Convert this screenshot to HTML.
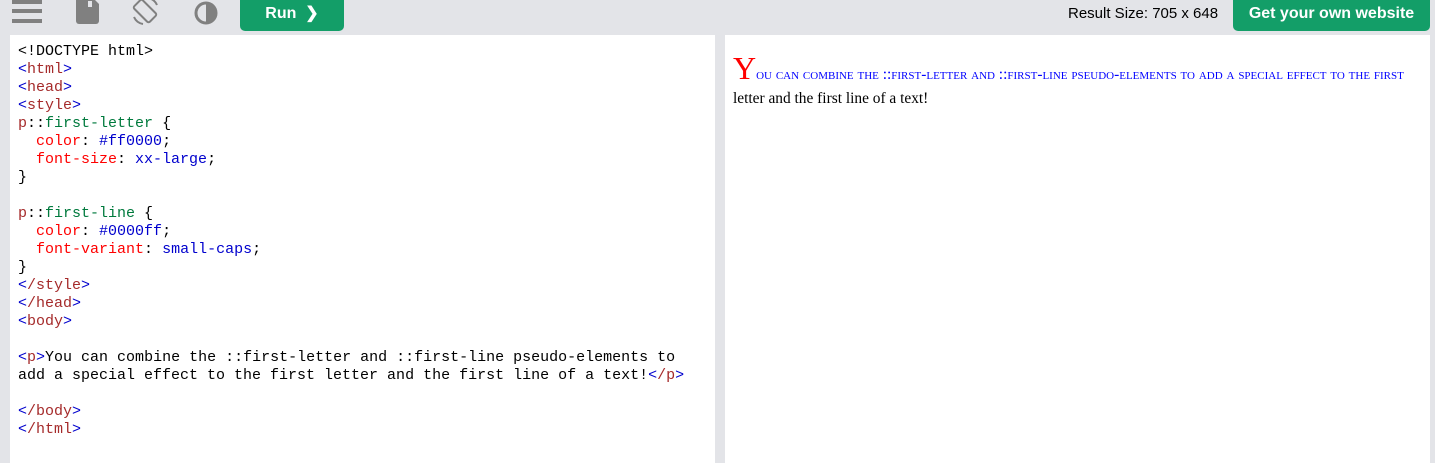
<!DOCTYPE html>
<html><head><style>
body{margin:0;width:1435px;height:463px;background:#e3e4e8;position:relative;overflow:hidden;font-family:"Liberation Sans",sans-serif}
.top{position:absolute;left:0;top:0;width:1435px;height:35px}
.btn{position:absolute;background:#139e68;color:#fff;font-weight:bold;border-radius:0 0 5px 5px}
.panel{position:absolute;top:35px;background:#fff;height:428px}
pre{margin:0;position:absolute;left:18px;top:43px;font-family:"Liberation Mono",monospace;font-size:15px;line-height:18px;color:#000}
.t{color:#a52a2a}.b{color:#0000cd}.r{color:#ff0000}.k{color:#0000cd}
.g{color:#007a3d}
p.o{position:absolute;left:733px;top:56px;width:690px;margin:0;font-family:"Liberation Serif",serif;font-size:15.4px;line-height:24px}
p.o::first-line{color:#0000ff;font-variant:small-caps}
p.o::first-letter{color:#ff0000;font-size:32px}
</style></head><body>
<div class="top">
<svg width="40" height="30" style="position:absolute;left:10px;top:0"><rect x="2" y="0" width="30" height="4" fill="#808080"/><rect x="2" y="9" width="30" height="4" fill="#808080"/><rect x="2" y="19" width="30" height="4" fill="#808080"/></svg>
<svg width="26" height="26" style="position:absolute;left:74px;top:0"><path d="M2 0h19l4 4v17a3 3 0 0 1-3 3H5a3 3 0 0 1-3-3z" fill="#808080"/><rect x="14" y="1" width="4" height="6" fill="#e3e4e8"/></svg>
<svg width="34" height="30" style="position:absolute;left:129px;top:-3px"><g fill="none" stroke="#808080" stroke-width="2"><rect x="10" y="3" width="12" height="22" rx="2" transform="rotate(-45 16 14)"/><path d="M5 20a12 12 0 0 0 9 7M28 8a12 12 0 0 0-9-7"/></g></svg>
<svg width="26" height="26" style="position:absolute;left:194px;top:1px"><circle cx="12" cy="12" r="10" fill="none" stroke="#808080" stroke-width="3"/><path d="M12 2a10 10 0 0 1 0 20z" fill="#808080"/></svg>
<div class="btn" style="left:240px;top:0;width:104px;height:31px;font-size:16px;line-height:27px;text-align:center">Run &nbsp;❯</div>
<div style="position:absolute;left:1068px;top:5px;font-size:15px;color:#000">Result Size: 705 x 648</div>
<div class="btn" style="left:1233px;top:0;width:197px;height:31px;font-size:16px;line-height:27px;text-align:center">Get your own website</div>
</div>
<div class="panel" style="left:10px;width:705px"></div>
<div class="panel" style="left:725px;width:705px"></div>
<pre>&lt;!DOCTYPE html&gt;
<span class="b">&lt;</span><span class="t">html</span><span class="b">&gt;</span>
<span class="b">&lt;</span><span class="t">head</span><span class="b">&gt;</span>
<span class="b">&lt;</span><span class="t">style</span><span class="b">&gt;</span>
<span class="t">p</span>::<span class="g">first-letter</span> {
  <span class="r">color</span>: <span class="k">#ff0000</span>;
  <span class="r">font-size</span>: <span class="k">xx-large</span>;
}

<span class="t">p</span>::<span class="g">first-line</span> {
  <span class="r">color</span>: <span class="k">#0000ff</span>;
  <span class="r">font-variant</span>: <span class="k">small-caps</span>;
}
<span class="b">&lt;</span><span class="t">/style</span><span class="b">&gt;</span>
<span class="b">&lt;</span><span class="t">/head</span><span class="b">&gt;</span>
<span class="b">&lt;</span><span class="t">body</span><span class="b">&gt;</span>

<span class="b">&lt;</span><span class="t">p</span><span class="b">&gt;</span>You can combine the ::first-letter and ::first-line pseudo-elements to
add a special effect to the first letter and the first line of a text!<span class="b">&lt;</span><span class="t">/p</span><span class="b">&gt;</span>

<span class="b">&lt;</span><span class="t">/body</span><span class="b">&gt;</span>
<span class="b">&lt;</span><span class="t">/html</span><span class="b">&gt;</span></pre>
<p class="o">You can combine the ::first-letter and ::first-line pseudo-elements to add a special effect to the first letter and the first line of a text!</p>
</body></html>
